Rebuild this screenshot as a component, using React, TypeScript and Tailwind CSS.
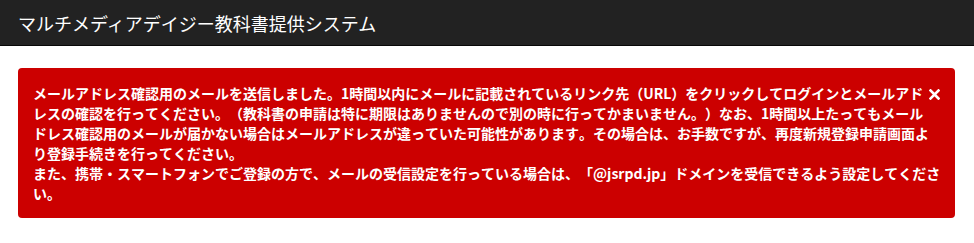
const font = {
  fontFamily: '"Noto Sans CJK JP", "Noto Sans", sans-serif',
};

const App = () => {
  return (
    <div className="min-h-screen bg-white" style={font}>
      <header className="h-[46px] bg-[#222222] border-b border-[#080808] flex items-center px-[18px]">
        <h1 className="text-[18px] leading-none text-white font-normal">
          マルチメディアデイジー教科書提供システム
        </h1>
      </header>
      <main className="px-[18px] pt-[22px]">
        <div className="relative rounded-[4px] bg-[#cc0000] text-white font-bold text-[14px] leading-[20px] pl-[15px] pr-[24px] py-[15px] w-[937px] [text-spacing-trim:space-all] [font-kerning:none]">
          <button className="absolute right-[15px] top-[21px] text-white" aria-label="close">
            <svg width="11" height="11" viewBox="0 0 11 11">
              <path d="M1.5 1.5 L9.5 9.5 M9.5 1.5 L1.5 9.5" stroke="white" strokeWidth="2.6" strokeLinecap="square" />
            </svg>
          </button>
          <p className="whitespace-nowrap">
            メールアドレス確認用のメールを送信しました。1時間以内にメールに記載されているリンク先（URL）をクリックしてログインとメールアド
            <br />
            レスの確認を行ってください。（教科書の申請は特に期限はありませんので別の時に行ってかまいません。）なお、1時間以上たってもメール
            <br />
            ドレス確認用のメールが届かない場合はメールアドレスが違っていた可能性があります。その場合は、お手数ですが、再度新規登録申請画面よ
            <br />
            り登録手続きを行ってください。
            <br />
            また、携帯・スマートフォンでご登録の方で、メールの受信設定を行っている場合は、「@jsrpd.jp」ドメインを受信できるよう設定してくださ
            <br />
            い。
          </p>
        </div>
      </main>
    </div>
  );
};

export default App;
